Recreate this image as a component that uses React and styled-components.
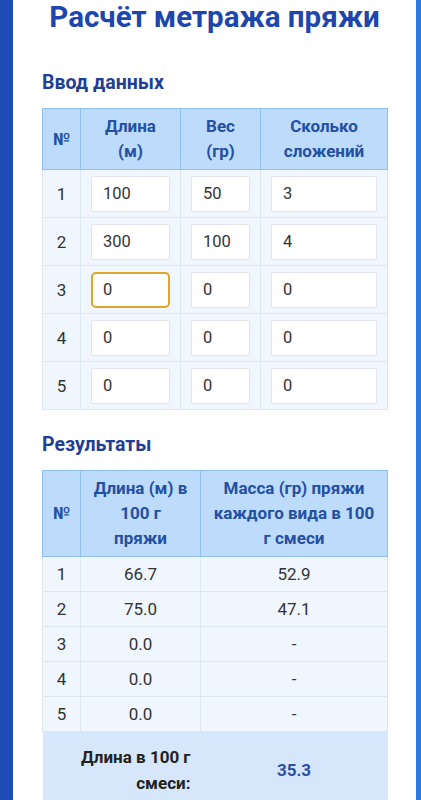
import React, { useState } from "react";
import styled, { createGlobalStyle } from "styled-components";

const GlobalStyle = createGlobalStyle`
  html, body {
    margin: 0;
    padding: 0;
  }
  body {
    font-family: Roboto, "Noto Sans", "Liberation Sans", sans-serif;
    background: linear-gradient(to right, #1f4cb5 0%, #2563d0 60%, #2a7ae0 100%);
    min-height: 100vh;
  }
`;

const Page = styled.div`
  padding: 0 5px 0 13px;
  min-height: 100vh;
`;

const Card = styled.div`
  background: #ffffff;
  min-height: 100vh;
  padding: 0 29px 40px;
  box-sizing: border-box;
`;

const Title = styled.h1`
  margin: 0;
  font-size: 29.5px;
  line-height: 34px;
  font-weight: 700;
  color: #1d47ad;
  text-align: center;
  white-space: nowrap;
`;

const SectionTitle = styled.h2`
  margin: ${(p) => p.$top}px 0 12px;
  font-size: 19.5px;
  line-height: 26px;
  font-weight: 700;
  color: #1f3f97;
`;

const Table = styled.table`
  width: 345px;
  border-collapse: collapse;
  table-layout: fixed;
  font-size: 17px;
  color: #333;
`;

const HeadCell = styled.th`
  background: #bddbfb;
  border: 1px solid #8fc0f0;
  color: #2350a3;
  font-weight: 700;
  line-height: 25px;
  padding: 5px ${(p) => p.$pad ?? 10}px;
  text-align: center;
`;

const Cell = styled.td`
  background: #f0f6fe;
  border: 1px solid #dce7f4;
  padding: ${(p) => (p.$input ? "5px 10px" : "5px 4px")};
  line-height: 24px;
  text-align: ${(p) => (p.$left ? "left" : "center")};
  height: ${(p) => p.$h}px;
  box-sizing: border-box;
`;

const Input = styled.input`
  display: block;
  width: 100%;
  height: 36px;
  box-sizing: border-box;
  border: ${(p) => (p.$focused ? "2px solid #e0a52e" : "1px solid #e2e6ec")};
  border-radius: ${(p) => (p.$focused ? "5px" : "2px")};
  background: #fff;
  padding: 0 ${(p) => (p.$focused ? "10px" : "11px")};
  font: inherit;
  font-size: 16.5px;
  color: #333;
  outline: none;
`;

const FootCell = styled.td`
  background: #d6e7fb;
  padding: 12px 10px;
  font-weight: 700;
  line-height: 26px;
  text-align: ${(p) => p.$align};
  color: ${(p) => p.$color};
`;

const initial = [
  ["100", "50", "3"],
  ["300", "100", "4"],
  ["0", "0", "0"],
  ["0", "0", "0"],
  ["0", "0", "0"],
];

const results = [
  ["66.7", "52.9"],
  ["75.0", "47.1"],
  ["0.0", "-"],
  ["0.0", "-"],
  ["0.0", "-"],
];

export default function App() {
  const [rows, setRows] = useState(initial);

  const update = (i, j, v) => {
    setRows(rows.map((r, ri) => (ri === i ? r.map((c, ci) => (ci === j ? v : c)) : r)));
  };

  return (
    <Page>
      <GlobalStyle />
      <Card>
        <Title>Расчёт метража пряжи</Title>

        <SectionTitle $top={36}>Ввод данных</SectionTitle>
        <Table>
          <colgroup>
            <col style={{ width: 38 }} />
            <col style={{ width: 100 }} />
            <col style={{ width: 80 }} />
            <col style={{ width: 127 }} />
          </colgroup>
          <thead>
            <tr>
              <HeadCell $pad={2}>№</HeadCell>
              <HeadCell>Длина<br />(м)</HeadCell>
              <HeadCell>Вес<br />(гр)</HeadCell>
              <HeadCell>Сколько<br />сложений</HeadCell>
            </tr>
          </thead>
          <tbody>
            {rows.map((r, i) => (
              <tr key={i}>
                <Cell $h={48}>{i + 1}</Cell>
                {r.map((v, j) => (
                  <Cell key={j} $input $left $h={48}>
                    <Input
                      type="text"
                      value={v}
                      $focused={i === 2 && j === 0}
                      onChange={(e) => update(i, j, e.target.value)}
                    />
                  </Cell>
                ))}
              </tr>
            ))}
          </tbody>
        </Table>

        <SectionTitle $top={22}>Результаты</SectionTitle>
        <Table>
          <colgroup>
            <col style={{ width: 38 }} />
            <col style={{ width: 120 }} />
            <col style={{ width: 187 }} />
          </colgroup>
          <thead>
            <tr>
              <HeadCell $pad={2}>№</HeadCell>
              <HeadCell $pad={12}>Длина (м) в 100 г пряжи</HeadCell>
              <HeadCell>Масса (гр) пряжи каждого вида в 100 г смеси</HeadCell>
            </tr>
          </thead>
          <tbody>
            {results.map((r, i) => (
              <tr key={i}>
                <Cell $h={35}>{i + 1}</Cell>
                <Cell $h={35}>{r[0]}</Cell>
                <Cell $h={35}>{r[1]}</Cell>
              </tr>
            ))}
          </tbody>
          <tfoot>
            <tr>
              <FootCell colSpan={2} $align="right" $color="#222">
                Длина в 100 г<br />смеси:
              </FootCell>
              <FootCell $align="center" $color="#2b4ea6">35.3</FootCell>
            </tr>
          </tfoot>
        </Table>
      </Card>
    </Page>
  );
}
